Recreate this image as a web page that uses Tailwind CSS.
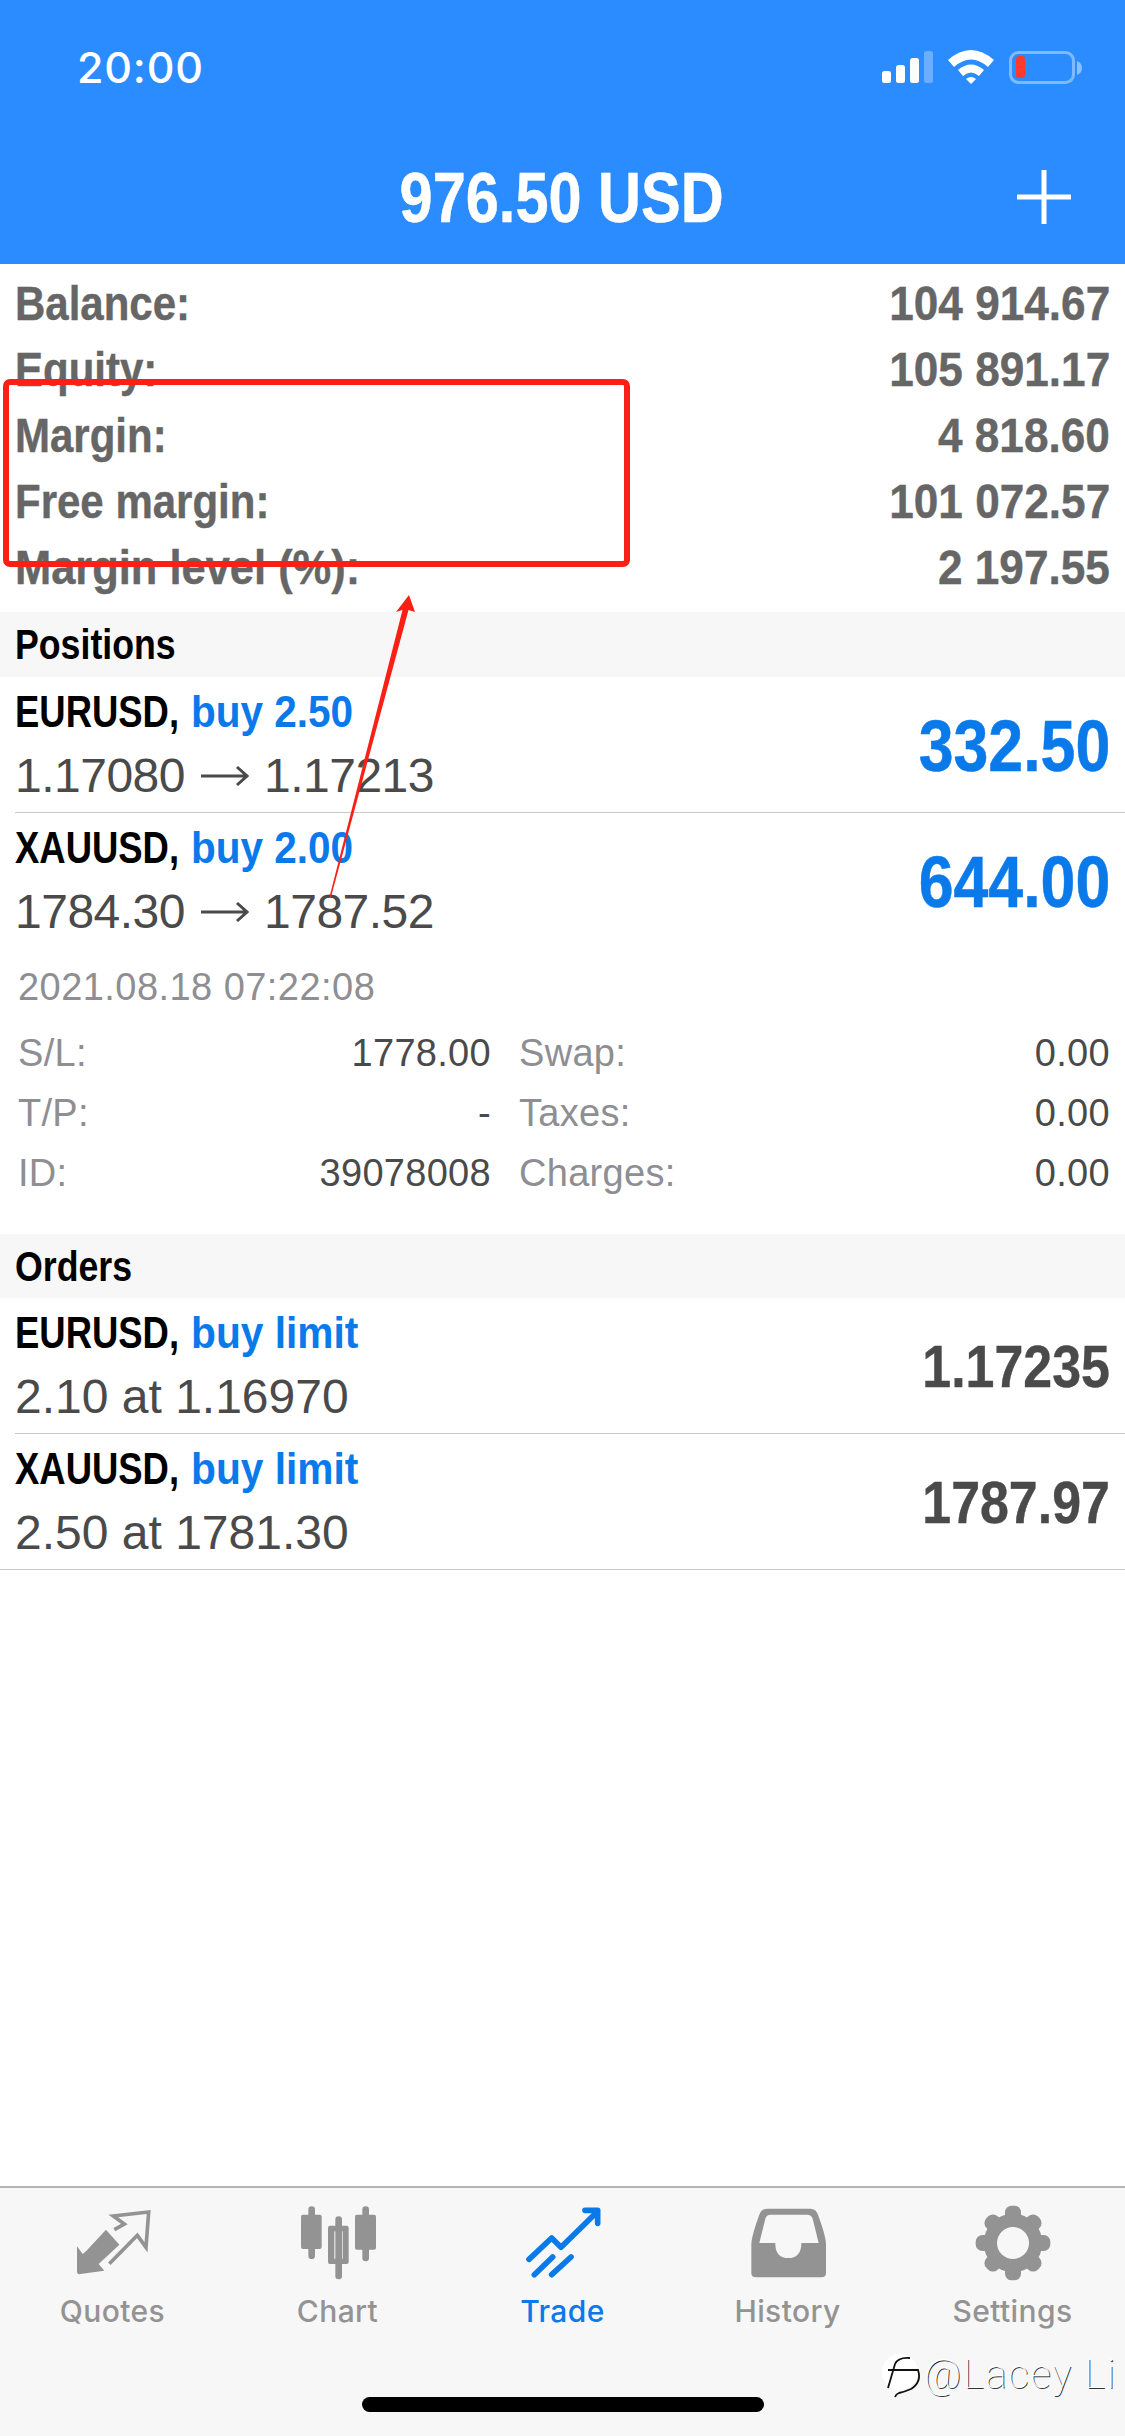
<!DOCTYPE html>
<html>
<head>
<meta charset="utf-8">
<script src="https://cdn.jsdelivr.net/npm/@tailwindcss/browser@4"></script>
</head>
<body class="bg-white">
<div class="relative w-[1125px] h-[2436px] flex flex-col overflow-hidden bg-white font-['Liberation_Sans',Arial,sans-serif]">

  <header class="h-[264px] bg-[#2b8cff] text-white flex flex-col shrink-0">
    <div class="h-[132px] flex items-center justify-between pl-[77px] pr-[40px]">
      <span class="font-['Inter',sans-serif] font-medium text-[43px] leading-none tracking-[0.8px] mt-[3px]">20:00</span>
      <svg width="205" height="40" viewBox="880 50 205 40" class="mt-[4px]">
        <rect x="882" y="73" width="9" height="12" rx="2.5" fill="#fff"/>
        <rect x="896" y="67" width="9" height="18" rx="2.5" fill="#fff"/>
        <rect x="910" y="60" width="9" height="25" rx="2.5" fill="#fff"/>
        <rect x="924" y="53" width="9" height="32" rx="2.5" fill="#fff" fill-opacity=".3"/>
        <path d="M948 62Q971 42 994 62L988 69Q971 54 954 69Z" fill="#fff"/>
        <path d="M958 72Q971 61 984 72L979 78Q971 71 963 78Z" fill="#fff"/>
        <path d="M966 81Q971 77 976 81L971 86Z" fill="#fff"/>
        <rect x="1010.5" y="54.5" width="63" height="30" rx="8" fill="none" stroke="#fff" stroke-opacity=".4" stroke-width="3"/>
        <rect x="1016" y="58" width="9" height="22" rx="3" fill="#ff3b30"/>
        <path d="M1077 63Q1082 65 1082 70Q1082 75 1077 77Z" fill="#fff" fill-opacity=".45"/>
      </svg>
    </div>
    <div class="relative h-[132px] flex items-center justify-center">
      <span class="inline-block scale-x-[.85] font-bold text-[70px] leading-none -ml-[2px] [-webkit-text-stroke:0.5px_currentColor]">976.50 USD</span>
      <svg class="absolute left-[1017px] top-[38px]" width="54" height="54" viewBox="0 0 54 54"><path d="M27 0V54M0 27H54" stroke="#fff" stroke-width="5"/></svg>
    </div>
  </header>

  <section class="pt-[7px] h-[348px] shrink-0 px-[15px] text-[#666666] font-bold text-[48px] [-webkit-text-stroke:0.4px_currentColor]">
    <div class="h-[66px] flex items-center justify-between"><span class="inline-block origin-left scale-x-[.875]">Balance:</span><span class="inline-block origin-right scale-x-[.92]">104 914.67</span></div>
    <div class="h-[66px] flex items-center justify-between"><span class="inline-block origin-left scale-x-[.875]">Equity:</span><span class="inline-block origin-right scale-x-[.92]">105 891.17</span></div>
    <div class="h-[66px] flex items-center justify-between"><span class="inline-block origin-left scale-x-[.875]">Margin:</span><span class="inline-block origin-right scale-x-[.92]">4 818.60</span></div>
    <div class="h-[66px] flex items-center justify-between"><span class="inline-block origin-left scale-x-[.875]">Free margin:</span><span class="inline-block origin-right scale-x-[.92]">101 072.57</span></div>
    <div class="h-[66px] flex items-center justify-between"><span class="inline-block origin-left scale-x-[.905]">Margin level (%):</span><span class="inline-block origin-right scale-x-[.92]">2 197.55</span></div>
  </section>

  <div class="h-[65px] shrink-0 bg-[#f7f7f7] px-[15px] flex items-center font-bold text-[42px] text-black"><span class="inline-block origin-left scale-x-[.85]">Positions</span></div>

  <div class="h-[136px] shrink-0 ml-[15px] pr-[15px] border-b border-[#c8c8c8] flex items-center justify-between">
    <div class="flex flex-col">
      <div class="h-[62px] -mt-[2px] mb-[2px] flex items-center text-[45px] font-bold"><span class="inline-block origin-left scale-x-[.81] w-[176px] text-black whitespace-nowrap">EURUSD,</span><span class="inline-block origin-left scale-x-[.9] text-[#0a7aea]">buy 2.50</span></div>
      <div class="h-[62px] flex items-center text-[48px] text-[#4a4a4a] tracking-[-0.5px]"><span class="w-[171px]">1.17080</span><svg class="mx-[15px]" width="48" height="24" viewBox="0 0 48 24" fill="none" stroke="#4a4a4a" stroke-width="3"><path d="M0 12H46M36 3L46 12L36 21"/></svg><span>1.17213</span></div>
    </div>
    <div class="inline-block mt-[3px] origin-right scale-x-[.87] font-bold text-[72px] text-[#0a7aea] leading-none [-webkit-text-stroke:0.5px_currentColor]">332.50</div>
  </div>

  <div class="h-[135px] shrink-0 px-[15px] flex items-center justify-between">
    <div class="flex flex-col">
      <div class="h-[62px] -mt-[2px] mb-[2px] flex items-center text-[45px] font-bold"><span class="inline-block origin-left scale-x-[.81] w-[176px] text-black whitespace-nowrap">XAUUSD,</span><span class="inline-block origin-left scale-x-[.9] text-[#0a7aea]">buy 2.00</span></div>
      <div class="h-[62px] flex items-center text-[48px] text-[#4a4a4a] tracking-[-0.5px]"><span class="w-[171px]">1784.30</span><svg class="mx-[15px]" width="48" height="24" viewBox="0 0 48 24" fill="none" stroke="#4a4a4a" stroke-width="3"><path d="M0 12H46M36 3L46 12L36 21"/></svg><span>1787.52</span></div>
    </div>
    <div class="inline-block mt-[3px] origin-right scale-x-[.87] font-bold text-[72px] text-[#0a7aea] leading-none [-webkit-text-stroke:0.5px_currentColor]">644.00</div>
  </div>

  <div class="h-[286px] shrink-0 pt-[9px] pl-[18px] pr-[15px] text-[38px] text-[#8e8e93] tracking-[0.3px]">
    <div class="h-[60px] flex items-center tracking-[0.45px]">2021.08.18 07:22:08</div>
    <div class="h-[6px]"></div>
    <div class="grid grid-cols-[473px_1fr] gap-x-[28px]">
      <div class="h-[60px] flex items-center justify-between"><span>S/L:</span><span class="text-[#4a4a4a]">1778.00</span></div>
      <div class="h-[60px] flex items-center justify-between"><span>Swap:</span><span class="text-[#4a4a4a]">0.00</span></div>
      <div class="h-[60px] flex items-center justify-between"><span>T/P:</span><span class="text-[#4a4a4a]">-</span></div>
      <div class="h-[60px] flex items-center justify-between"><span>Taxes:</span><span class="text-[#4a4a4a]">0.00</span></div>
      <div class="h-[60px] flex items-center justify-between"><span>ID:</span><span class="text-[#4a4a4a]">39078008</span></div>
      <div class="h-[60px] flex items-center justify-between"><span>Charges:</span><span class="text-[#4a4a4a]">0.00</span></div>
    </div>
  </div>

  <div class="h-[64px] shrink-0 bg-[#f7f7f7] px-[15px] flex items-center font-bold text-[42px] text-black"><span class="inline-block origin-left scale-x-[.85]">Orders</span></div>

  <div class="h-[136px] shrink-0 ml-[15px] pr-[15px] border-b border-[#c8c8c8] flex items-center justify-between">
    <div class="flex flex-col">
      <div class="h-[62px] -mt-[2px] mb-[2px] flex items-center text-[45px] font-bold"><span class="inline-block origin-left scale-x-[.81] w-[176px] text-black whitespace-nowrap">EURUSD,</span><span class="inline-block origin-left scale-x-[.905] text-[#0a7aea]">buy limit</span></div>
      <div class="h-[62px] flex items-center text-[48px] text-[#4a4a4a]">2.10 at 1.16970</div>
    </div>
    <div class="inline-block mt-[2px] origin-right scale-x-[.865] font-bold text-[60px] text-[#4a4a4a] leading-none [-webkit-text-stroke:0.4px_currentColor]">1.17235</div>
  </div>

  <div class="h-[136px] shrink-0 px-[15px] border-b border-[#c8c8c8] flex items-center justify-between">
    <div class="flex flex-col">
      <div class="h-[62px] -mt-[2px] mb-[2px] flex items-center text-[45px] font-bold"><span class="inline-block origin-left scale-x-[.81] w-[176px] text-black whitespace-nowrap">XAUUSD,</span><span class="inline-block origin-left scale-x-[.905] text-[#0a7aea]">buy limit</span></div>
      <div class="h-[62px] flex items-center text-[48px] text-[#4a4a4a]">2.50 at 1781.30</div>
    </div>
    <div class="inline-block mt-[2px] origin-right scale-x-[.865] font-bold text-[60px] text-[#4a4a4a] leading-none [-webkit-text-stroke:0.4px_currentColor]">1787.97</div>
  </div>

  <div class="flex-1"></div>

  <nav class="h-[250px] shrink-0 bg-[#f7f7f7] border-t-2 border-[#b4b4b4] flex flex-col">
    <div class="grid grid-cols-5 pt-[10px] font-['Inter',sans-serif] font-medium text-[30px] tracking-[0.4px] text-[#939393]">
      <div class="flex flex-col items-center">
        <svg width="90" height="90" viewBox="51 10 270 270">
          <path d="M78 155V232Q78 240 88 238L160 228L143 208L205 150L165 105L105 170L95 178Z" fill="#939393"/>
          <path d="M190 105L220 88L187 64L293 52L285 158L259 122L175 207" fill="none" stroke="#939393" stroke-width="11"/>
        </svg>
        <span class="mt-[1px] leading-[44px]">Quotes</span>
      </div>
      <div class="flex flex-col items-center">
        <svg width="90" height="90" viewBox="726 10 270 270" fill="#939393">
          <rect x="772" y="35" width="20" height="158" rx="10"/><rect x="750" y="60" width="62" height="103" rx="6"/>
          <rect x="853" y="65" width="20" height="189" rx="10"/><path fill-rule="evenodd" d="M837 93H887Q893 93 893 99V202Q893 208 887 208H837Q831 208 831 202V99Q831 93 837 93ZM850 110V192H875V110Z"/>
          <rect x="934" y="35" width="20" height="165" rx="10"/><rect x="912" y="60" width="63" height="105" rx="6"/>
        </svg>
        <span class="mt-[1px] leading-[44px]">Chart</span>
      </div>
      <div class="flex flex-col items-center text-[#0a7aea]">
        <svg width="90" height="90" viewBox="51 10 270 270" fill="none" stroke="#0a7aea" stroke-width="17" stroke-linecap="round" stroke-linejoin="round">
          <path d="M84 194L152 130L180 158L285 55"/><path d="M252 47H290V86"/><path d="M100 240L155 187"/><path d="M152 240L210 187"/>
        </svg>
        <span class="mt-[1px] leading-[44px]">Trade</span>
      </div>
      <div class="flex flex-col items-center">
        <svg width="90" height="90" viewBox="723 10 270 270">
          <path fill="#939393" fill-rule="evenodd" d="M795 42H925Q942 42 948 60Q972 125 972 150V235Q972 248 958 248H762Q748 248 748 235V150Q748 125 772 60Q778 42 795 42ZM805 60Q794 60 790 72L772 145H820V150Q822 190 859 190Q895 190 898 150V145H950L932 72Q928 60 915 60Z"/>
        </svg>
        <span class="mt-[1px] leading-[44px]">History</span>
      </div>
      <div class="flex flex-col items-center">
        <svg width="90" height="90" viewBox="320 10 270 270" fill="#939393">
          <circle cx="455" cy="145" r="88"/>
          <g transform="rotate(0 455 145)"><rect x="431" y="33" width="48" height="224" rx="20"/></g>
          <g transform="rotate(45 455 145)"><rect x="431" y="36" width="48" height="218" rx="20"/></g>
          <g transform="rotate(90 455 145)"><rect x="431" y="33" width="48" height="224" rx="20"/></g>
          <g transform="rotate(135 455 145)"><rect x="431" y="36" width="48" height="218" rx="20"/></g>
          <circle cx="455" cy="145" r="48" fill="#f7f7f7"/>
        </svg>
        <span class="mt-[1px] leading-[44px]">Settings</span>
      </div>
    </div>
    <div class="flex-1 flex justify-center items-end pb-[24px]">
      <div class="w-[402px] h-[15px] rounded-full bg-black"></div>
    </div>
  </nav>

  <!-- annotations painted over the screenshot -->
  <div class="absolute left-[3px] top-[379px] w-[627px] h-[188px] border-[6px] border-[#fb2016] rounded-[7px]"></div>
  <svg class="absolute left-0 top-0 pointer-events-none" width="1125" height="950" viewBox="0 0 1125 950">
    <path d="M409 595L415 612L408.500 610L331 897L329.500 897L402.500 610L396 612Z" fill="#fb2016"/>
  </svg>

  <div class="absolute left-[882px] top-[2352px] flex items-center">
    <svg width="42" height="46" viewBox="0 0 42 46" class="shrink-0">
      <circle cx="18" cy="20" r="18" fill="#fff"/>
      <path d="M28 6Q16 5 13 12L6 36M6 18H36Q40 30 29 37Q22 40 17 41Q14 42 13 45" fill="none" stroke="#111" stroke-width="1.8"/>
    </svg>
    <span class="font-['Roboto',sans-serif] font-thin text-[40px] leading-none tracking-[1.8px] text-white [text-shadow:1px_1px_0_#333]">@Lacey Li</span>
  </div>
</div>
</body>
</html>
